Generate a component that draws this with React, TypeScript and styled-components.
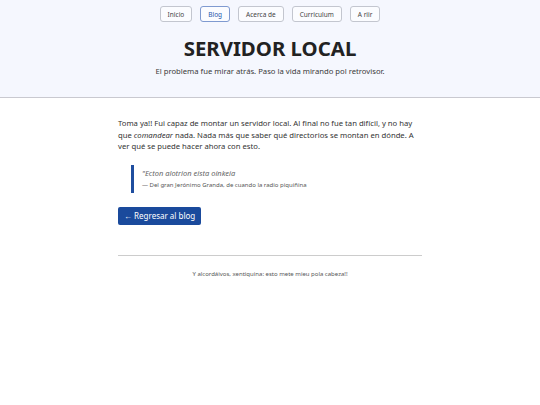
import * as React from 'react';
import styled, { createGlobalStyle } from 'styled-components';

const GlobalStyle = createGlobalStyle`
  * { box-sizing: border-box; }
  body {
    margin: 0;
    background: #ffffff;
    font-family: 'Noto Sans', 'Open Sans', sans-serif;
    color: #222222;
  }
`;

const links = ['Inicio', 'Blog', 'Acerca de', 'Curriculum', 'A riir'];

const App: React.FC = () => {
  return (
    <>
      <GlobalStyle />
      <Header>
        <Nav>
          {links.map((l) => (
            <NavButton key={l} active={l === 'Blog'}>
              {l}
            </NavButton>
          ))}
        </Nav>
        <Title>SERVIDOR LOCAL</Title>
        <Subtitle>El problema fue mirar atrás. Paso la vida mirando pol retrovisor.</Subtitle>
      </Header>
      <Main>
        <Paragraph>
          Toma ya!! Fui capaz de montar un servidor local. Al final no fue tan difícil, y no hay
          que <Emph>comandear</Emph> nada. Nada más que saber qué directorios se montan en dónde. A
          ver qué se puede hacer ahora con esto.
        </Paragraph>
        <Quote>
          <QuoteText>"Ecton alotrion eista oinkeia</QuoteText>
          <Cite>— Del gran Jerónimo Granda, de cuando la radio piquiñina</Cite>
        </Quote>
        <BackButton>← Regresar al blog</BackButton>
        <Rule />
        <Footer>Y alcordáivos, xentiquina: esto mete mieu pola cabeza!!</Footer>
      </Main>
    </>
  );
};

const Header = styled.header`
  background: #f5f7fe;
  border-bottom: 1px solid #c9c9d0;
  padding: 6px 0 21px;
  display: flex;
  flex-direction: column;
  align-items: center;
`;

const Nav = styled.nav`
  display: flex;
  gap: 8px;
`;

interface NavProps {
  active?: boolean;
}

const NavButton = styled.a<NavProps>`
  display: inline-flex;
  align-items: center;
  height: 16px;
  padding: 0 7px;
  font-size: 6.5px;
  border-radius: 3px;
  background: #fbfcff;
  border: 1px solid ${({ active }) => (active ? '#7f9ad0' : '#c3c6cf')};
  color: ${({ active }) => (active ? '#2255aa' : '#444444')};
  cursor: pointer;
`;

const Title = styled.h1`
  margin: 13px 0 0;
  font-size: 20.4px;
  line-height: 26px;
  font-weight: 700;
  color: #222222;
`;

const Subtitle = styled.p`
  margin: 5px 0 0;
  font-size: 7.7px;
  line-height: 10px;
  color: #3a3a3a;
`;

const Main = styled.main`
  width: 304px;
  margin: 0 auto;
  padding-top: 20px;
`;

const Paragraph = styled.p`
  margin: 0;
  font-size: 7.7px;
  line-height: 11.6px;
  color: #333333;
`;

const Emph = styled.span`
  font-style: italic;
`;

const Quote = styled.blockquote`
  margin: 12px 0 0 13px;
  padding: 3px 0 3px 8px;
  border-left: 3px solid #1f4e9f;
`;

const QuoteText = styled.p`
  margin: 0;
  font-size: 7.5px;
  line-height: 10px;
  font-style: italic;
  color: #666666;
`;

const Cite = styled.p`
  margin: 3px 0 0;
  font-size: 6px;
  line-height: 9px;
  color: #555555;
`;

const BackButton = styled.a`
  display: inline-flex;
  align-items: center;
  margin-top: 14px;
  height: 18px;
  padding: 0 6px;
  background: #1a4a9c;
  color: #ffffff;
  font-size: 8px;
  border-radius: 2px;
  cursor: pointer;
`;

const Rule = styled.hr`
  margin: 30px 0 0;
  border: none;
  border-top: 1px solid #cccccc;
`;

const Footer = styled.footer`
  margin-top: 14px;
  text-align: center;
  font-size: 6px;
  line-height: 9px;
  color: #555555;
`;

export default App;
